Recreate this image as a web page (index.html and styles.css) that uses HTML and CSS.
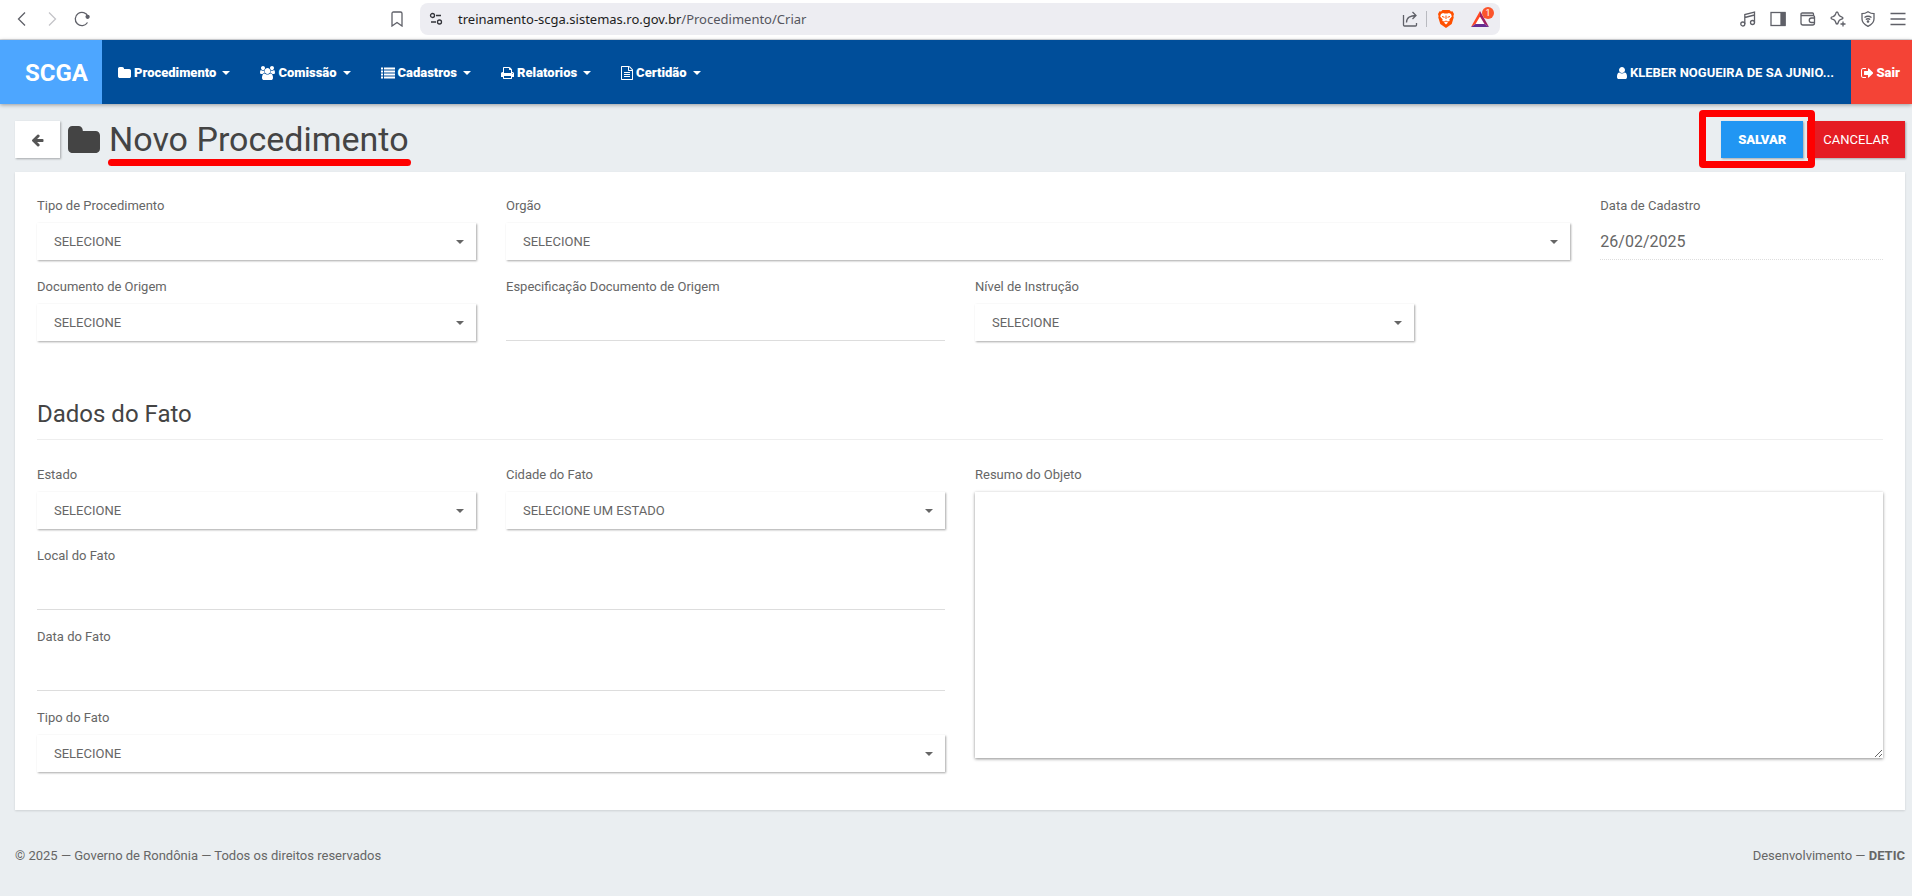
FILE: index.html
```html
<!DOCTYPE html>
<html lang="pt-br">
<head>
  <meta charset="UTF-8" />
  <meta name="viewport" content="width=device-width, initial-scale=1.0"/>
  <title>SCGA - Novo Procedimento</title>
  <link rel="stylesheet" href="styles.css">
</head>
<body>

  <!-- Browser toolbar -->
  <div class="browser">
    <div class="browser-left">
      <div class="browser-nav">
        <button class="tool" aria-label="Voltar"><svg width="16" height="16" viewBox="0 0 16 16"><path d="M11 1.500L4.500 8l6.500 6.500"/></svg></button>
        <button class="tool faded" aria-label="Avançar"><svg width="16" height="16" viewBox="0 0 16 16"><path d="M5 1.500L11.500 8 5 14.500"/></svg></button>
        <button class="tool" aria-label="Recarregar"><svg width="16" height="16" viewBox="0 0 16 16"><path d="M13.500 11.500A6.600 6.600 0 1 1 14 5.500"/><circle cx="13.600" cy="5.800" r="1.500" fill="currentColor"/></svg></button>
      </div>
      <button class="tool" aria-label="Favoritos"><svg width="16" height="16" viewBox="0 0 16 16"><path d="M3 2.500Q3 1 4.500 1h7Q13 1 13 2.500V15l-5-3.500L3 15z"/></svg></button>
    </div>
    <div class="address">
      <svg class="tune" width="14" height="14" viewBox="0 0 14 14"><circle cx="3.500" cy="3.500" r="2"/><path d="M7 3.500h5M2 10h5"/><circle cx="10.500" cy="10" r="2"/></svg>
      <span class="url">treinamento-scga.sistemas.ro.gov.br<span class="path">/Procedimento/Criar</span></span>
      <button class="tool" aria-label="Compartilhar"><svg width="16" height="16" viewBox="0 0 16 16"><path d="M1.500 4v10q0 1 1 1h11q1 0 1-1v-2M4.500 11.500c0-5 4-7 9.500-7M10.500 1L14 4.500 10.500 8"/></svg></button>
      <span class="divider"></span>
      <button class="tool" aria-label="Brave Shields"><svg width="16" height="18" viewBox="0 0 16 18"><path fill="#ff5000" stroke="none" d="M4.500 0h7l1.500 1.500 1.500-.2L16 4l-.6 2 .3 1.500-2 6.500L8 18l-5.700-4L.3 7.500.6 6 0 4l1.500-2.700 1.500.2z"/><path fill="#fff" stroke="none" d="M3 4l2-1 1.500.6h3L11 3l2 1 .8 2.500-2.500 3 .4 1.500-2 .5L8 10.500l-1.700 1-2-.5.400-1.500-2.500-3zM6 12.500l2-1 2 1L8 14.500z"/><path stroke="#ff5000" stroke-width="1" d="M4 6.500l2.500.8M12 6.500l-2.500.8M8 5.500v3.500"/></svg></button>
      <button class="tool rewards" aria-label="Brave Rewards"><svg width="18" height="16" viewBox="0 0 18 16"><path fill="#fff" stroke="none" d="M9 5.500L4.500 13h9z"/><path fill="#ff4724" stroke="none" d="M9 0L0 16l4.500-3L9 5.500z"/><path fill="#9e1f63" stroke="none" d="M9 0l9 16-4.500-3L9 5.500z"/><path fill="#662d91" stroke="none" d="M0 16h18l-4.500-3h-9z"/></svg><span class="badge">1</span></button>
    </div>
    <div class="browser-tools">
      <button class="tool" aria-label="Mídia"><svg width="16" height="16" viewBox="0 0 16 16"><circle cx="2.800" cy="13" r="2"/><circle cx="12.500" cy="11.500" r="2"/><path d="M4.800 13V3.500L14.500 1v10.500M4.800 6.500l9.700-2.500"/></svg></button>
      <button class="tool" aria-label="Barra lateral"><svg width="16" height="16" viewBox="0 0 16 16"><rect x="1" y="1.500" width="14" height="13"/><path fill="currentColor" d="M11 2h4v12h-4z"/></svg></button>
      <button class="tool" aria-label="Carteira"><svg width="16" height="16" viewBox="0 0 16 16"><path d="M1 3.500V12q0 2 2 2h9.500q2 0 2-2V6q0-1.500-1.500-1.500H2.500Q1 4.500 1 3.200T2.500 2h10q1 0 1 1v1.500"/><path d="M15 7h-3.500a2.200 2.200 0 0 0 0 4.500H15"/></svg></button>
      <button class="tool" aria-label="Leo"><svg width="16" height="16" viewBox="0 0 16 16"><path d="M7 1q1 0 1.400 2 .7 2 2.600 2.600 2 .6 2 1.400t-2 1.400Q9 9 8.400 11 8 13 7 13t-1.400-2Q5 9 3 8.400 1 8 1 7t2-1.400Q5 5 5.600 3 6 1 7 1zM13 10.500v5M10.500 13h5"/></svg></button>
      <button class="tool" aria-label="VPN"><svg width="16" height="16" viewBox="0 0 16 16"><path d="M8 .7q3 2 6 2V8q0 4.500-6 7.300Q2 12.500 2 8V2.700q3 0 6-2z"/><path d="M4.500 6.500q3.500-2.500 7 0M5.800 8.500q2.200-1.500 4.400 0"/><circle cx="8" cy="10.500" r=".7" fill="currentColor"/></svg></button>
      <button class="tool" aria-label="Menu"><svg width="16" height="16" viewBox="0 0 16 16"><path d="M.5 2.500h15M.5 8h15M.5 13.500h15"/></svg></button>
    </div>
  </div>

  <!-- Main menu -->
  <nav class="navbar">
    <a class="brand" href="#">SCGA</a>
    <ul class="menu">
      <li><a href="#"><svg class="fa" viewBox="0 0 1664 1792"><path d="M1664 608v704q0 92-66 158t-158 66h-1216q-92 0-158-66t-66-158v-960q0-92 66-158t158-66h320q92 0 158 66t66 158v32h672q92 0 158 66t66 158z"/></svg>Procedimento<span class="caret"></span></a></li>
      <li><a href="#"><svg class="fa" viewBox="0 0 1920 1792"><path d="M593 896q-162 5-265 128h-134q-82 0-138-40.500t-56-118.500q0-353 124-353 6 0 43.500 21t97.500 42.500 119 21.500q67 0 133-23-5 37-5 66 0 139 81 256zm1071 637q0 120-73 189.500t-194 69.500h-874q-121 0-194-69.500t-73-189.500q0-53 3.500-103.500t14-109 26.500-108.500 43-97.500 62-81 85.500-53.500 111.500-20q10 0 43 21.500t73 48 107 48 135 21.500 135-21.500 107-48 73-48 43-21.500q61 0 111.500 20t85.500 53.500 62 81 43 97.500 26.500 108.500 14 109 3.500 103.500zm-1024-1277q0 106-75 181t-181 75-181-75-75-181 75-181 181-75 181 75 75 181zm704 384q0 159-112.500 271.500t-271.500 112.500-271.500-112.500-112.500-271.500 112.500-271.500 271.500-112.500 271.500 112.500 112.500 271.500zm576 225q0 78-56 118.500t-138 40.500h-134q-103-123-265-128 81-117 81-256 0-29-5-66 66 23 133 23 59 0 119-21.500t97.500-42.500 43.500-21q124 0 124 353zm-128-609q0 106-75 181t-181 75-181-75-75-181 75-181 181-75 181 75 75 181z"/></svg>Comissão<span class="caret"></span></a></li>
      <li><a href="#"><svg class="fa" viewBox="0 0 1792 1792"><path d="M0 192h256v256H0zM384 192h1408v256H384zM0 576h256v256H0zM384 576h1408v256H384zM0 960h256v256H0zM384 960h1408v256H384zM0 1344h256v256H0zM384 1344h1408v256H384z"/></svg>Cadastros<span class="caret"></span></a></li>
      <li><a href="#"><svg class="fa" viewBox="64 0 1664 1792"><path d="M448 1536h896v-256h-896v256zm0-640h896v-384h-160q-40 0-68-28t-28-68v-160h-640v640zm1152 64q0-26-19-45t-45-19-45 19-19 45 19 45 45 19 45-19 19-45zm128 0v416q0 13-9.500 22.500t-22.500 9.500h-224v160q0 40-28 68t-68 28h-960q-40 0-68-28t-28-68v-160h-224q-13 0-22.500-9.500t-9.500-22.500v-416q0-79 56.500-135.500t135.500-56.500h64v-544q0-40 28-68t68-28h672q40 0 88 20t76 48l152 152q28 28 48 76t20 88v256h64q79 0 135.500 56.500t56.500 135.500z"/></svg>Relatorios<span class="caret"></span></a></li>
      <li><a href="#"><svg class="fa" viewBox="128 0 1536 1792"><path d="M1596 380q28 28 48 76t20 88v1152q0 40-28 68t-68 28h-1344q-40 0-68-28t-28-68v-1600q0-40 28-68t68-28h896q40 0 88 20t76 48zm-444-244v376h376q-10-29-22-41l-313-313q-12-12-41-22zm384 1528v-1024h-416q-40 0-68-28t-28-68v-416h-768v1536h1280zm-1024-864q0-14 9-23t23-9h704q14 0 23 9t9 23v64q0 14-9 23t-23 9h-704q-14 0-23-9t-9-23v-64zm736 224q14 0 23 9t9 23v64q0 14-9 23t-23 9h-704q-14 0-23-9t-9-23v-64q0-14 9-23t23-9h704zm0 256q14 0 23 9t9 23v64q0 14-9 23t-23 9h-704q-14 0-23-9t-9-23v-64q0-14 9-23t23-9h704z"/></svg>Certidão<span class="caret"></span></a></li>
    </ul>
    <a class="user" href="#"><svg class="fa" viewBox="256 0 1280 1792"><path d="M1536 1399q0 109-62.500 187t-150.500 78h-854q-88 0-150.500-78t-62.500-187q0-85 8.500-160.500t31.500-152 58.500-131 94-89 134.500-34.500q131 128 313 128t313-128q76 0 134.500 34.500t94 89 58.500 131 31.500 152 8.500 160.500zm-256-887q0 159-112.500 271.500t-271.500 112.500-271.500-112.500-112.500-271.500 112.500-271.500 271.500-112.500 271.500 112.500 112.500 271.500z"/></svg>KLEBER NOGUEIRA DE SA JUNIO...</a>
    <a class="logout" href="#"><svg class="fa" viewBox="64 0 1600 1792"><path d="M704 1440q0 4 1 20t.5 26.500-3 23.500-10 19.500-20.500 6.500h-320q-119 0-203.500-84.500t-84.500-203.500v-704q0-119 84.500-203.500t203.500-84.500h320q13 0 22.500 9.500t9.500 22.500q0 4 1 20t.5 26.500-3 23.500-10 19.500-20.500 6.500h-320q-66 0-113 47t-47 113v704q0 66 47 113t113 47h312l11.500 1 11.500 3 8 5.500 7 9 2 13.500zm928-544q0 26-19 45l-544 544q-19 19-45 19t-45-19-19-45v-288h-448q-26 0-45-19t-19-45v-384q0-26 19-45t45-19h448v-288q0-26 19-45t45-19 45 19l544 544q19 19 19 45z"/></svg>Sair</a>
  </nav>

  <main class="page">
    <!-- Title and actions -->
    <header class="page-header">
      <button class="btn btn-back" aria-label="Voltar"><svg class="fa" viewBox="64 0 1664 1792"><path d="M1664 896v128q0 53-32.500 90.500t-84.500 37.500h-704l293 294q38 36 38 90t-38 90l-75 76q-37 37-90 37-52 0-91-37l-651-652q-37-37-37-90 0-52 37-91l651-650q38-38 91-38 52 0 90 38l75 74q38 38 38 91t-38 91l-293 293h704q52 0 84.500 37.500t32.500 90.500z"/></svg></button>
      <svg class="title-icon" viewBox="0 128 1664 1408"><path d="M1664 608v704q0 92-66 158t-158 66h-1216q-92 0-158-66t-66-158v-960q0-92 66-158t158-66h320q92 0 158 66t66 158v32h672q92 0 158 66t66 158z"/></svg>
      <h1 class="title">Novo Procedimento</h1>
      <div class="actions">
        <div class="marked"><button class="btn btn-save" type="submit" form="procedimento">Salvar</button></div>
        <button class="btn btn-cancel" type="button">Cancelar</button>
      </div>
    </header>

    <form class="card" id="procedimento">
      <div class="row">
        <div class="field col-3">
          <label for="tipo">Tipo de Procedimento</label>
          <div class="select"><select id="tipo"><option>SELECIONE</option></select></div>
        </div>
        <div class="field col-7">
          <label for="orgao">Orgão</label>
          <div class="select"><select id="orgao"><option>SELECIONE</option></select></div>
        </div>
        <div class="field col-2">
          <label for="cadastro">Data de Cadastro</label>
          <input type="text" id="cadastro" class="input" value="26/02/2025" disabled>
        </div>
        <div class="field col-3">
          <label for="documento">Documento de Origem</label>
          <div class="select"><select id="documento"><option>SELECIONE</option></select></div>
        </div>
        <div class="field col-3">
          <label for="especificacao">Especificação Documento de Origem</label>
          <input type="text" id="especificacao" class="input">
        </div>
        <div class="field col-3">
          <label for="instrucao">Nível de Instrução</label>
          <div class="select"><select id="instrucao"><option>SELECIONE</option></select></div>
        </div>
      </div>

      <h2 class="section-title">Dados do Fato</h2>

      <div class="row">
        <div class="row col-6 nested">
          <div class="field half">
            <label for="estado">Estado</label>
            <div class="select"><select id="estado"><option>SELECIONE</option></select></div>
          </div>
          <div class="field half">
            <label for="cidade">Cidade do Fato</label>
            <div class="select"><select id="cidade"><option>SELECIONE UM ESTADO</option></select></div>
          </div>
          <div class="field full">
            <label for="local">Local do Fato</label>
            <input type="text" id="local" class="input">
          </div>
          <div class="field full">
            <label for="data">Data do Fato</label>
            <input type="text" id="data" class="input">
          </div>
          <div class="field full">
            <label for="tipofato">Tipo do Fato</label>
            <div class="select"><select id="tipofato"><option>SELECIONE</option></select></div>
          </div>
        </div>
        <div class="field col-6">
          <label for="resumo">Resumo do Objeto</label>
          <textarea id="resumo" rows="10"></textarea>
        </div>
      </div>
    </form>

    <footer class="footer">
      <span>© 2025 — Governo de Rondônia — Todos os direitos reservados</span>
      <span>Desenvolvimento — <b>DETIC</b></span>
    </footer>
  </main>

</body>
</html>
```
FILE: styles.css
```css
* {
  box-sizing: border-box;
}
body {
  margin: 0;
  background-color: #eaeef1;
  color: #666;
  font-family: Roboto, "Liberation Sans", sans-serif;
  font-size: 13px;
  line-height: 20px;
}
a {
  color: inherit;
  text-decoration: none;
}
button, select, input, textarea {
  font-family: inherit;
  color: inherit;
}

/* Browser toolbar */
.browser {
  display: flex;
  align-items: center;
  height: 40px;
  padding: 0 6px 2px 14px;
  background-color: #fff;
  border-bottom: 1px solid #dcdde0;
}
.browser-left {
  display: flex;
  justify-content: space-between;
  width: 406px;
  padding-right: 15px;
}
.browser-nav, .browser-tools {
  display: flex;
  gap: 14px;
}
.browser-tools {
  margin-left: auto;
}
.tool {
  display: flex;
  padding: 0;
  border: none;
  background: none;
  color: #5f6068;
  cursor: pointer;
}
.tool svg, .tune {
  fill: none;
  stroke: currentColor;
  stroke-width: 1.3;
}
.faded {
  color: #c4c4c8;
}
.address {
  display: flex;
  align-items: center;
  flex: 0 1 1080px;
  height: 32px;
  padding: 0 11px 0 9px;
  border-radius: 8px;
  background-color: #ededf2;
}
.tune {
  margin-right: 15px;
  color: #33343a;
}
.url {
  flex: 1;
  font-family: "Noto Sans", "Open Sans", sans-serif;
  font-size: 13px;
  color: #1d1e22;
}
.path {
  color: #55565e;
}
.divider {
  width: 1px;
  height: 16px;
  margin: 0 11px 0 8px;
  background-color: #b9bac0;
}
.rewards {
  position: relative;
  margin-left: 17px;
}
.badge {
  position: absolute;
  top: -4px;
  right: -5px;
  width: 12px;
  height: 12px;
  border-radius: 50%;
  background-color: #fb542b;
  color: #fff;
  font-size: 9px;
  line-height: 12px;
  text-align: center;
}

/* Main menu */
.navbar {
  display: flex;
  height: 64px;
  background-color: #004e9a;
  color: #fff;
  font-weight: 900;
  box-shadow: 0 1px 4px rgba(0, 0, 0, .35);
}
.fa {
  height: 14px;
  margin-right: 3px;
  fill: currentColor;
}
.brand {
  display: flex;
  align-items: center;
  padding: 1px 14px 0 25px;
  background-color: #4da6ff;
  font-size: 24px;
  font-weight: 700;
}
.menu {
  display: flex;
  margin: 0;
  padding: 0 0 0 1px;
  list-style: none;
}
.menu a, .user, .logout {
  display: flex;
  align-items: center;
  height: 100%;
  padding: 1px 15px 0;
}
.caret {
  margin-left: 6px;
  border: 4px solid transparent;
  border-top-color: currentColor;
  border-bottom: none;
}
.user {
  margin-left: auto;
  padding-right: 17px;
  font-weight: 700;
}
.logout {
  padding: 1px 12px 0 10px;
  background-color: #f44336;
}

/* Title and actions */
.page {
  padding: 17px 7px 0 15px;
}
.page-header {
  display: flex;
  align-items: center;
  height: 37px;
  margin-bottom: 14px;
}
.title-icon {
  width: 32px;
  margin: 0 9px 0 8px;
  fill: #444;
}
.title {
  position: relative;
  margin: 0;
  color: #444;
  font-size: 34px;
  font-weight: 400;
  line-height: 37px;
}
.title::after {
  content: "";
  position: absolute;
  left: -1px;
  right: -2px;
  bottom: -8px;
  height: 7px;
  border-radius: 4px;
  background-color: #f00;
}
.btn {
  height: 37px;
  padding: 0 16px;
  border: none;
  background-color: #fff;
  color: #fff;
  font-size: 13px;
  text-transform: uppercase;
  box-shadow: 1px 1px 2px rgba(0, 0, 0, .3);
  cursor: pointer;
}
.btn-back {
  color: #555;
}
.btn-back .fa {
  display: block;
  margin: 0;
}
.btn-save {
  padding: 0 17px;
  background-color: #2196f3;
  font-weight: 900;
}
.btn-cancel {
  background-color: #e51c23;
}
.actions {
  display: flex;
  gap: 4px;
  margin-left: auto;
}
.marked {
  position: relative;
}
.marked::after {
  content: "";
  position: absolute;
  top: -11px;
  right: -12px;
  bottom: -10px;
  left: -22px;
  border: 7px solid #f00;
  border-radius: 4px;
  pointer-events: none;
}

/* Form */
.card {
  padding: 24px 22px 21px;
  background-color: #fff;
  box-shadow: 0 1px 2px rgba(0, 0, 0, .12);
}
.row {
  display: grid;
  grid-template-columns: repeat(12, 1fr);
  column-gap: 30px;
}
.nested {
  grid-template-columns: 1fr 1fr;
}
.col-2 {
  grid-column: span 2;
}
.col-3 {
  grid-column: span 3;
}
.col-6 {
  grid-column: span 6;
}
.col-7 {
  grid-column: span 7;
}
.full {
  grid-column: span 2;
}
.field {
  margin-bottom: 17px;
}
.field label {
  display: block;
  margin-bottom: 7px;
}
.select {
  position: relative;
}
.select::after {
  content: "";
  position: absolute;
  top: 17px;
  right: 12px;
  border: 4px solid transparent;
  border-top-color: #666;
  border-bottom: none;
  pointer-events: none;
}
.select select {
  appearance: none;
  display: block;
  width: 100%;
  height: 37px;
  padding: 0 17px;
  border: none;
  border-radius: 0;
  background-color: #fff;
  font-size: 13px;
  box-shadow: 1px 1px 2px rgba(0, 0, 0, .35);
}
.input {
  display: block;
  width: 100%;
  height: 37px;
  padding: 0;
  border: none;
  border-bottom: 1px solid #ddd;
  border-radius: 0;
  background: none;
  font-size: 16px;
}
.input:disabled {
  border-bottom-style: dotted;
}
textarea {
  display: block;
  width: 100%;
  height: 266px;
  padding: 8px;
  border: none;
  font-size: 16px;
  box-shadow: 0 1px 3px rgba(0, 0, 0, .45);
}
.section-title {
  margin: 39px 0 25px;
  padding-bottom: 7px;
  border-bottom: 1px solid #eee;
  color: #444;
  font-size: 24px;
  font-weight: 400;
  line-height: 35px;
}

.footer {
  display: flex;
  justify-content: space-between;
  padding: 36px 0 31px;
}
```
